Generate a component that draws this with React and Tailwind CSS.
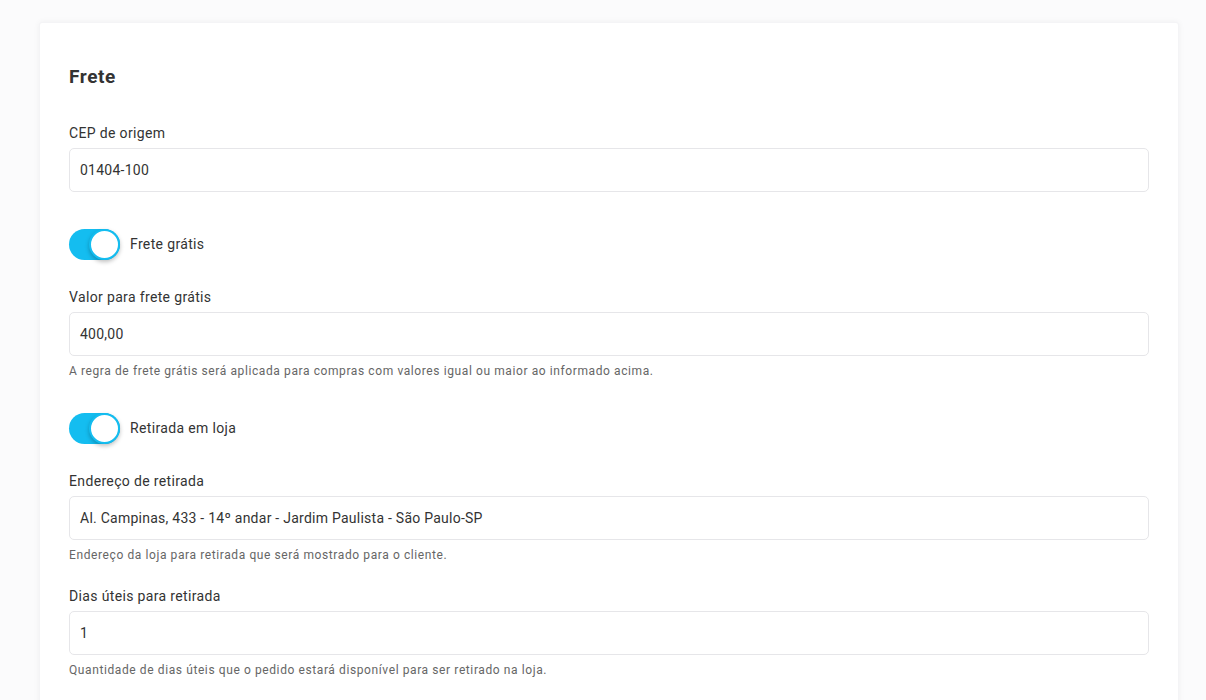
import React from 'react';

const font = { fontFamily: 'Roboto, "Liberation Sans", sans-serif' };

const Toggle = ({ label }) => (
  <div className="flex items-center h-[31px]">
    <div className="relative w-[51px] h-[31px] rounded-full bg-[#14bdf0]">
      <div className="absolute right-0 top-0 w-[31px] h-[31px] rounded-full bg-white border-2 border-[#14bdf0] shadow-[0_2px_4px_rgba(0,0,0,0.25)]" />
    </div>
    <span className="ml-[10px] text-[14px] text-[#333] tracking-[0.35px]">{label}</span>
  </div>
);

const Field = ({ label, value, help }) => (
  <div>
    <div className="text-[14px] leading-[20px] text-[#333] mb-[5px] tracking-[0.35px]">{label}</div>
    <div className="h-[44px] border border-[#e6e6e9] rounded-[5px] flex items-center px-[10px] text-[14px] text-[#333] tracking-[0.25px]">
      {value}
    </div>
    {help && <div className="mt-[6px] text-[12px] leading-[18px] text-[#666] tracking-[0.6px]">{help}</div>}
  </div>
);

export default function App() {
  return (
    <div className="min-h-screen bg-[#fbfbfc] pt-[22px] px-[39px] overflow-hidden" style={font}>
      <div className="bg-white w-[1140px] rounded-[3px] shadow-[0_0_6px_rgba(0,0,0,0.05)] border border-[#f4f4f6] px-[29px] pt-[40px] pb-[60px]">
        <h2 className="text-[19px] leading-[28px] font-bold text-[#333] tracking-[0.6px] mb-[32px]">Frete</h2>
        <Field label="CEP de origem" value="01404-100" />
        <div className="mt-[37px] mb-[27px]">
          <Toggle label="Frete grátis" />
        </div>
        <Field
          label="Valor para frete grátis"
          value="400,00"
          help="A regra de frete grátis será aplicada para compras com valores igual ou maior ao informado acima."
        />
        <div className="mt-[33px] mb-[27px]">
          <Toggle label="Retirada em loja" />
        </div>
        <Field
          label="Endereço de retirada"
          value="Al. Campinas, 433 - 14º andar - Jardim Paulista - São Paulo-SP"
          help="Endereço da loja para retirada que será mostrado para o cliente."
        />
        <div className="mt-[22px]">
          <Field
            label="Dias úteis para retirada"
            value="1"
            help="Quantidade de dias úteis que o pedido estará disponível para ser retirado na loja."
          />
        </div>
      </div>
    </div>
  );
}
